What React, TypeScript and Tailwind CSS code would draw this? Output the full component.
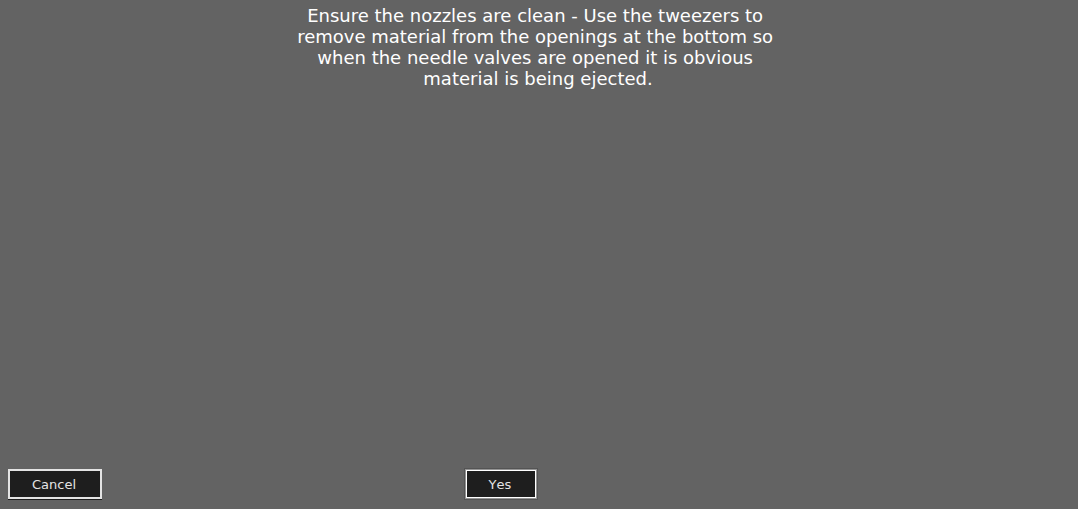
export default function App() {
  return (
    <main className="flex min-h-screen flex-col bg-[#636363] font-['DejaVu_Sans',sans-serif] text-white">
      <p className="mx-auto w-[488px] whitespace-break-spaces pt-[5px] pr-[2px] text-center text-[18px] leading-[21px]">
        Ensure the nozzles are clean - Use the tweezers to remove material from the openings at the bottom so when the
        needle valves are opened it is obvious material is being ejected.
      </p>
      <div className="mt-auto grid grid-cols-[6fr_auto_7fr] items-center px-2 pb-[10px] text-[13px] text-[#e4e4e4] [font-kerning:none]">
        <button
          type="button"
          className="h-[30px] w-[94px] justify-self-start border-2 border-[#e4e4e4] bg-[#1e1e1e] pt-[2px] pr-[2px] shadow-[0_1px_0_#1e1e1e]"
        >
          Cancel
        </button>
        <button
          type="button"
          className="h-7 w-[70px] border border-white bg-[#1e1e1e] pt-[2px] pr-[2px] shadow-[0_0_0_1px_#959595,0_0_0_2px_#545454]"
        >
          Yes
        </button>
      </div>
    </main>
  );
}
